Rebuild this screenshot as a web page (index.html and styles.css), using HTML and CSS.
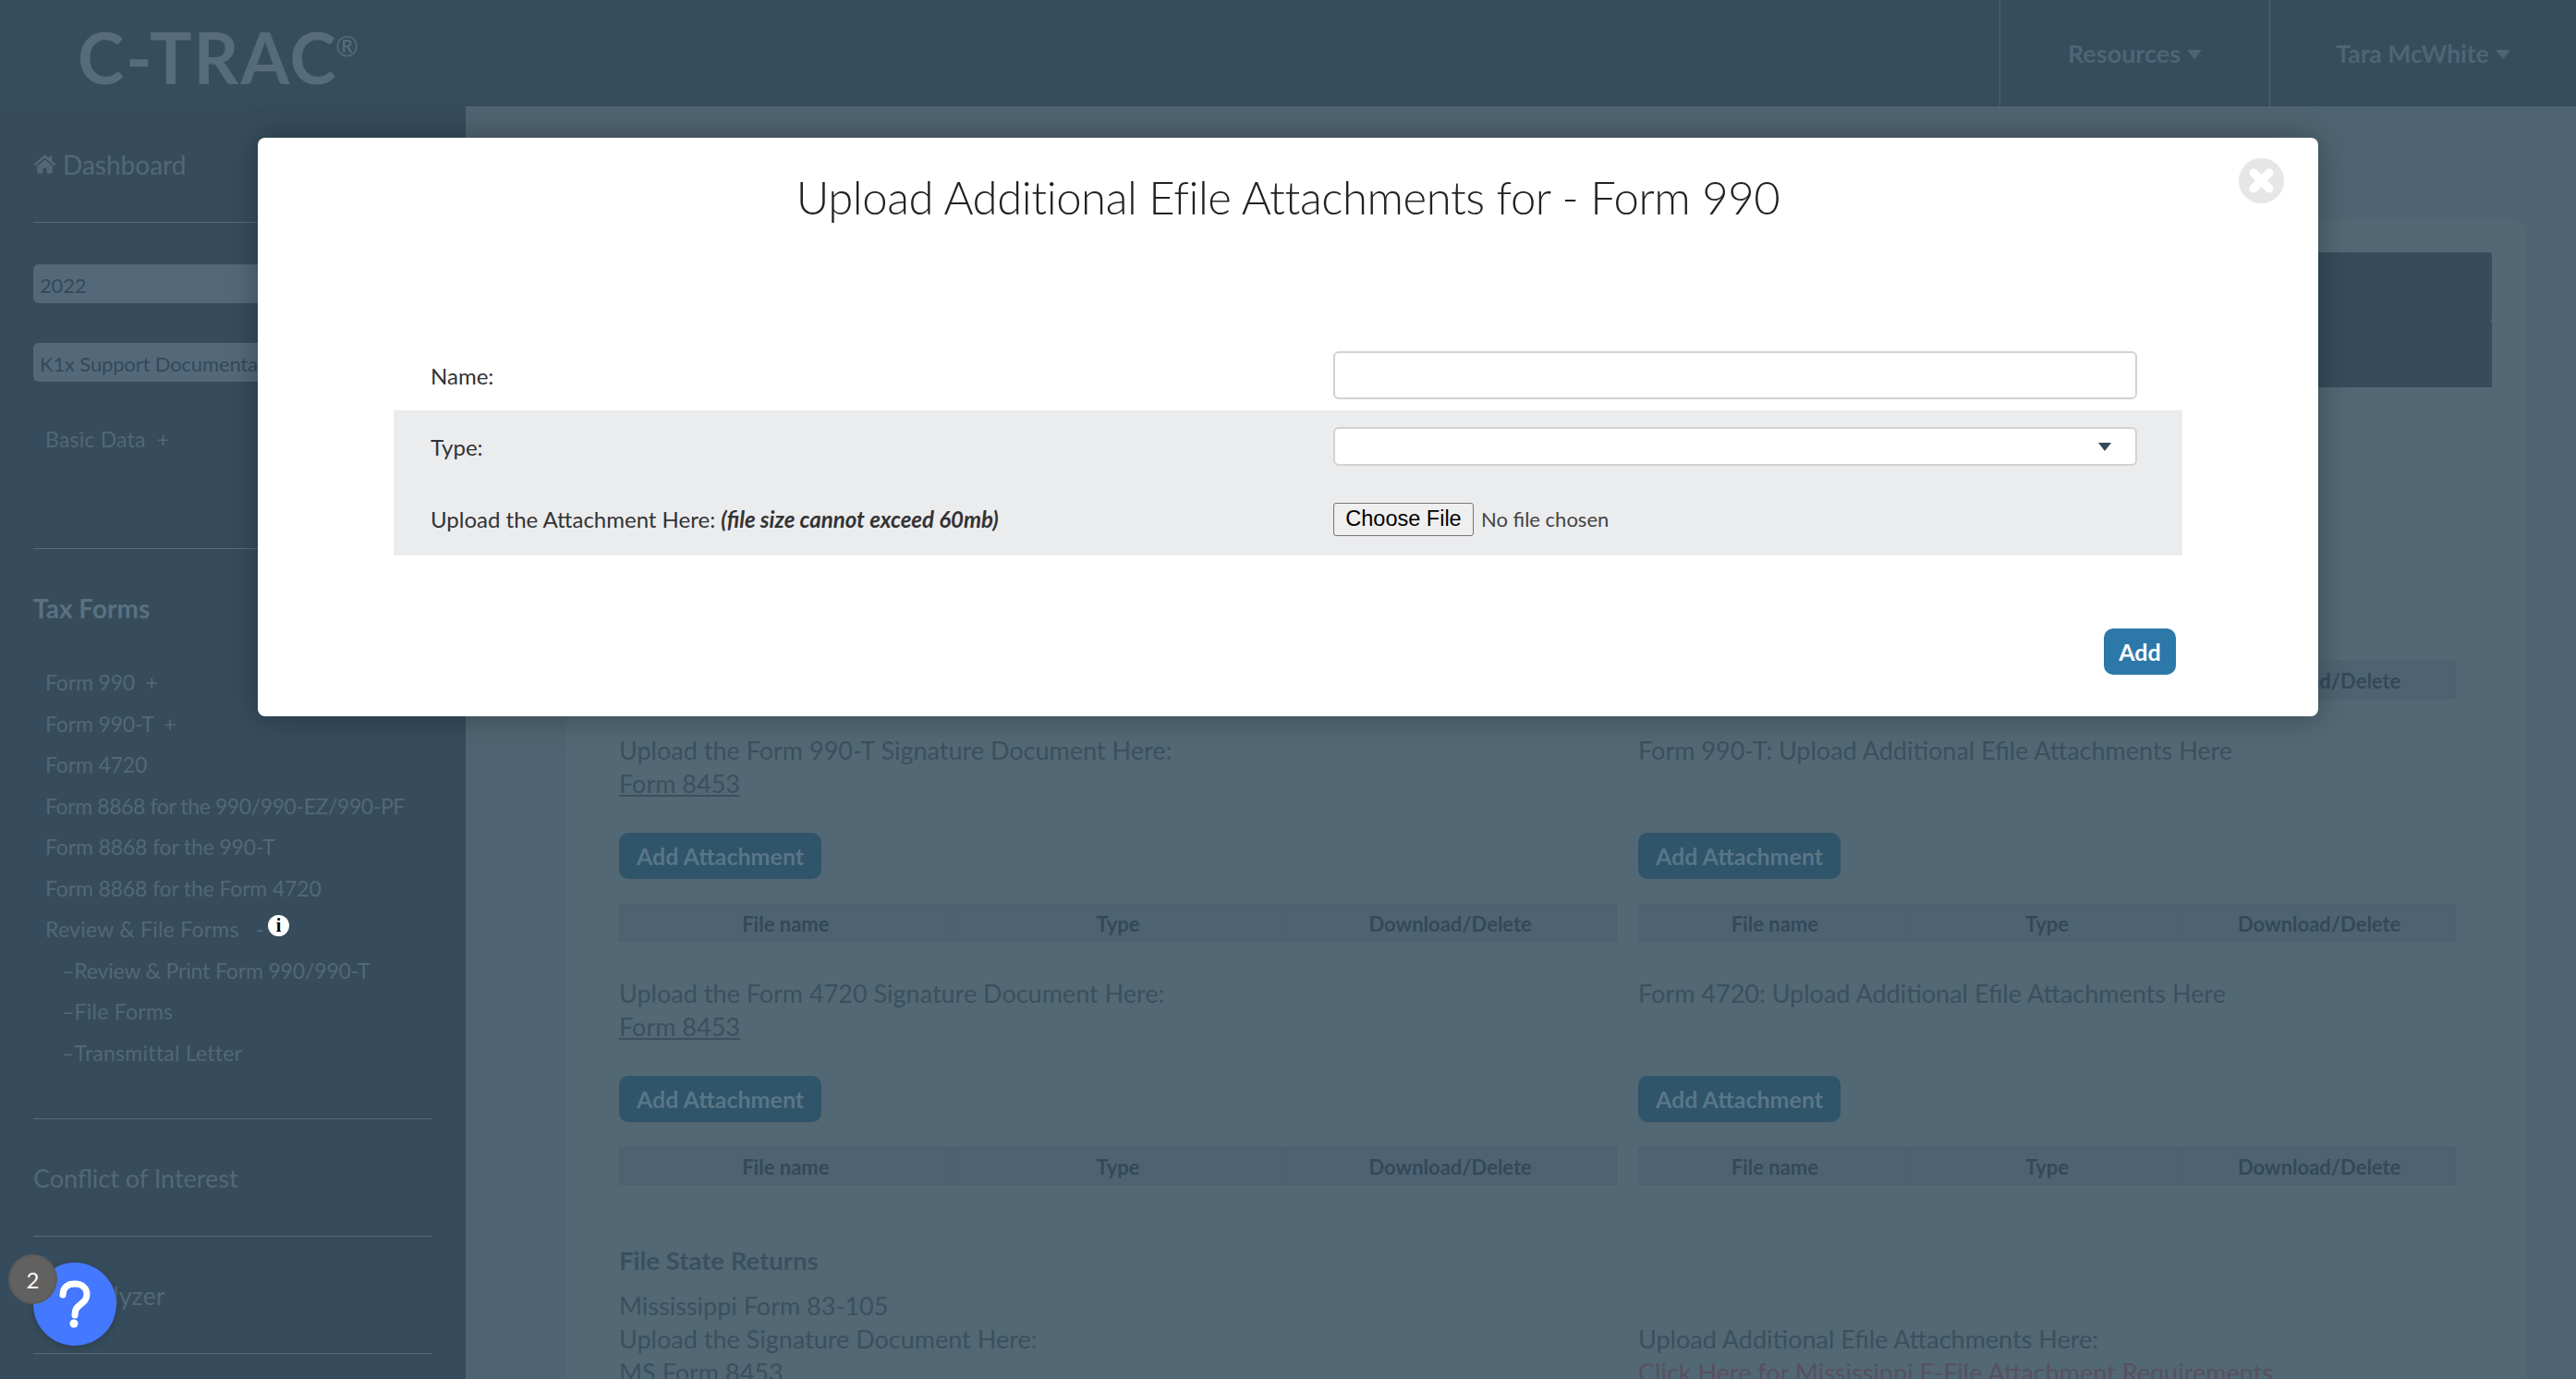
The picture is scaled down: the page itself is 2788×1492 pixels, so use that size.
FILE: index.html
```html
<!DOCTYPE html>
<html lang="en">
<head>
<meta charset="utf-8">
<title>C-TRAC</title>
<link rel="stylesheet" href="styles.css">
</head>
<body>
<div class="app">
  <header class="topbar">
    <div class="logo">C-TRAC<sup class="reg">®</sup></div>
    <nav class="topnav">
      <div class="topnav-item res">Resources<span class="caret"></span></div>
      <div class="topnav-item usr">Tara McWhite<span class="caret"></span></div>
    </nav>
  </header>
  <div class="body-row">
    <aside class="sidebar">
      <div class="side-dash">
        <svg class="home" viewBox="0 0 24 20"><path d="M12 0.5 L0.5 10.2 L2 12 L12 3.6 L22 12 L23.5 10.2 L19.5 6.8 V1.5 H16.5 V4.3 Z M4 12.2 V19.5 H10 V14 H14 V19.5 H20 V12.2 L12 5.5 Z"/></svg>
        <span>Dashboard</span>
      </div>
      <div class="side-selects">
        <div class="side-select">2022</div>
        <div class="side-select">K1x Support Documentation</div>
        <div class="side-link basic">Basic Data&nbsp;&nbsp;+</div>
      </div>
      <div class="side-section taxforms">
        <div class="side-title">Tax Forms</div>
        <ul class="side-list">
          <li>Form 990&nbsp;&nbsp;+</li>
          <li>Form 990-T&nbsp;&nbsp;+</li>
          <li>Form 4720</li>
          <li class="tight">Form 8868 for the 990/990-EZ/990-PF</li>
          <li>Form 8868 for the 990-T</li>
          <li>Form 8868 for the Form 4720</li>
          <li class="wordy">Review &amp; File Forms&nbsp;&nbsp;&nbsp;-<span class="info">i</span></li>
          <li class="sub">–Review &amp; Print Form 990/990-T</li>
          <li class="sub wordy">–File Forms</li>
          <li class="sub wordy">–Transmittal Letter</li>
        </ul>
      </div>
      <div class="side-section single">Conflict of Interest</div>
      <div class="side-section single">K1 Analyzer</div>
    </aside>
    <main class="main">
      <section class="card">
        <div class="dark-box"></div>
        <div class="dark-box second"></div>
        <div class="upload-grid">
          <div class="cell"></div>
          <div class="cell first-right">
            <table class="files"><tr><th>File name</th><th>Type</th><th>Download/Delete</th></tr></table>
          </div>
          <div class="cell">
            <p>Upload the Form 990-T Signature Document Here:</p>
            <p><a class="doc">Form 8453</a></p>
            <button class="btn-dim">Add Attachment</button>
            <table class="files"><tr><th>File name</th><th>Type</th><th>Download/Delete</th></tr></table>
          </div>
          <div class="cell">
            <p>Form 990-T: Upload Additional Efile Attachments Here</p>
            <p>&nbsp;</p>
            <button class="btn-dim">Add Attachment</button>
            <table class="files"><tr><th>File name</th><th>Type</th><th>Download/Delete</th></tr></table>
          </div>
          <div class="cell">
            <p>Upload the Form 4720 Signature Document Here:</p>
            <p><a class="doc">Form 8453</a></p>
            <button class="btn-dim">Add Attachment</button>
            <table class="files"><tr><th>File name</th><th>Type</th><th>Download/Delete</th></tr></table>
          </div>
          <div class="cell">
            <p>Form 4720: Upload Additional Efile Attachments Here</p>
            <p>&nbsp;</p>
            <button class="btn-dim">Add Attachment</button>
            <table class="files"><tr><th>File name</th><th>Type</th><th>Download/Delete</th></tr></table>
          </div>
          <div class="state">
            <h4>File State Returns</h4>
            <p>Mississippi Form 83-105</p>
            <p>Upload the Signature Document Here:</p>
            <p>MS Form 8453</p>
          </div>
          <div class="state">
            <h4>&nbsp;</h4>
            <p>&nbsp;</p>
            <p>Upload Additional Efile Attachments Here:</p>
            <p class="req">Click Here for Mississippi E-File Attachment Requirements</p>
          </div>
        </div>
      </section>
    </main>
  </div>
</div>

<div class="help">
  <svg class="help-q" viewBox="0 0 90 90"><path d="M32 35 C32 26 38 23 45 23 C53 23 58 28 58 34 C58 42 52 44 48 48 C45.500 50.500 45 53 45 57" fill="none" stroke="#fff" stroke-width="7" stroke-linecap="round"/><circle cx="44" cy="66" r="4.500" fill="#fff"/></svg>
  <span class="help-badge">2</span>
</div>

<div class="modal" role="dialog">
  <svg class="modal-close" viewBox="0 0 49 49"><circle cx="24.500" cy="24.500" r="24.500" fill="#e6e6e6"/><path d="M16 16 L33 33 M33 16 L16 33" stroke="#fff" stroke-width="9" stroke-linecap="round"/></svg>
  <h2 class="modal-title">Upload Additional Efile Attachments for - Form 990</h2>
  <div class="form-row name-row">
    <label>Name:</label>
    <input class="text-input" type="text">
  </div>
  <div class="form-band">
    <div class="form-row type-row">
      <label>Type:</label>
      <div class="select-box"><span class="select-arrow"></span></div>
    </div>
    <div class="form-row file-row">
      <label>Upload the Attachment Here: <em>(file size cannot exceed 60mb)</em></label>
      <div class="file-field"><button class="file-btn">Choose File</button><span>No file chosen</span></div>
    </div>
  </div>
  <div class="modal-actions"><button class="btn-add">Add</button></div>
</div>
</body>
</html>
```
FILE: styles.css
```css
* { box-sizing: border-box; }
html, body { margin: 0; height: 100%; overflow: hidden; }
body {
  font-family: "Lato", "Noto Sans", sans-serif;
  font-size: 27px;
  color: #3a5060;
  background: #4f6472;
  position: relative;
}
.app { height: 1492px; display: flex; flex-direction: column; overflow: hidden; }

/* top bar */
.topbar { height: 115px; flex: none; background: #364d5d; display: flex; justify-content: space-between; }
.logo { padding: 22px 0 0 84px; font-size: 76px; line-height: 80px; font-weight: 700; color: #566c7a; letter-spacing: 2px; white-space: nowrap; }
.reg { font-size: 30px; font-weight: 400; line-height: 0; vertical-align: 30px; letter-spacing: 0; margin-left: -3px; }
.topnav { display: flex; }
.topnav-item { display: flex; align-items: center; justify-content: center; border-left: 1px solid #4e6472; font-size: 27px; font-weight: 700; color: #4e6575; }
.topnav-item.res { width: 292px; }
.topnav-item.usr { width: 332px; font-size: 26.500px; }
.caret { margin-left: 7px; margin-top: 2px; border-left: 8px solid transparent; border-right: 8px solid transparent; border-top: 10px solid #4e6575; }

.body-row { flex: 1; display: flex; min-height: 0; }

/* sidebar */
.sidebar { width: 504px; flex: none; background: #364c5c; padding: 0 36px; color: #526876; font-size: 23px; letter-spacing: -0.150px; }
.side-dash { height: 126px; display: flex; align-items: center; gap: 7px; border-bottom: 1px solid #54697a; font-size: 28px; letter-spacing: 0; }
.home { width: 25px; height: 21px; fill: #526876; }
.side-selects { height: 353px; padding-top: 45px; border-bottom: 1px solid #54697a; }
.side-select { height: 42px; margin-bottom: 43px; padding: 2px 7px 0; display: flex; align-items: center; background: #53697a; border-radius: 6px; color: #33495a; font-size: 22px; white-space: nowrap; }
.side-link.basic { margin-left: 13px; padding-top: 5px; letter-spacing: 0.200px; }
.taxforms { height: 617px; padding-top: 44px; border-bottom: 1px solid #54697a; }
.side-title { font-size: 28px; font-weight: 700; letter-spacing: 0; color: #5a7180; line-height: 40px; }
.side-list { list-style: none; margin: 38px 0 0; padding: 0 0 0 13px; }
.side-list li { height: 44.560px; line-height: 44.560px; white-space: nowrap; position: relative; }
.side-list .sub { padding-left: 18px; }
.side-list .tight { letter-spacing: -0.400px; }
.side-list .wordy { letter-spacing: 0.250px; }
.info { display: inline-flex; align-items: center; justify-content: center; width: 23px; height: 23px; margin-left: 4px; border-radius: 50%; background: #fff; color: #000; font: 700 20px/23px "Liberation Serif", serif; letter-spacing: 0; vertical-align: 6px; }
.single { height: 127px; display: flex; align-items: center; font-size: 27px; letter-spacing: 0; border-bottom: 1px solid #54697a; white-space: nowrap; }

/* main */
.main { flex: 1; min-width: 0; padding: 122px 55px 0 109px; }
.card { background: #526874; border-radius: 10px; padding: 36px 36px 0 57px; height: 1400px; }
.dark-box { height: 73px; background: #364c5c; border-radius: 4px 4px 0 0; }
.upload-grid { margin-top: 112px; display: grid; grid-template-columns: 1080px 885px; column-gap: 23px; }
.cell { height: 263px; }
.first-right { padding-top: 157px; }
.cell p, .state p { margin: 0; height: 36px; line-height: 36px; white-space: nowrap; }
.doc { text-decoration: underline; }
.btn-dim { display: block; height: 50px; width: 219px; margin-top: 35px; border: 0; border-radius: 10px; background: #305469; color: #587688; font: 700 25px "Lato", sans-serif; padding: 0; }
.files { width: 100%; height: 41px; margin-top: 27px; border-collapse: collapse; table-layout: fixed; background: #4e6372; }
.files th { border: 1px solid #4b6070; padding: 2px 0 0; font-size: 22px; font-weight: 700; color: #33495a; }
.state { padding-top: 26px; }
.state h4 { margin: 0 0 13px; height: 36px; line-height: 36px; font-size: 27.500px; font-weight: 700; color: #3a5060; }
.req { color: #58505f; }

/* help bubble */
.help { position: absolute; left: 36px; top: 1366px; width: 90px; height: 90px; border-radius: 50%; background: #4478ff; box-shadow: 0 2px 8px rgba(0,0,0,.2); }
.help-q { display: block; width: 90px; height: 90px; }
.help-badge { position: absolute; left: -27px; top: -9px; width: 53px; height: 54px; border-radius: 50%; background: #616161; border: 2px solid #5b5b5b; color: #fff; font-size: 24px; display: flex; align-items: center; justify-content: center; }

/* modal */
.modal { position: absolute; left: 279px; top: 149px; width: 2230px; height: 626px; background: #fff; border-radius: 8px; box-shadow: 0 0 34px rgba(0,0,0,.3); color: #333; }
.modal-close { position: absolute; right: 37px; top: 22px; width: 49px; height: 49px; }
.modal-title { margin: 0 0 86px; height: 128px; display: flex; align-items: center; justify-content: center; font-size: 49px; letter-spacing: -0.400px; font-weight: 300; color: #222; }
.form-row { display: grid; grid-template-columns: 1017px 870px; align-items: center; padding: 0; margin: 0 147px; }
.form-row label { padding-left: 40px; font-size: 24px; white-space: nowrap; }
.form-row em { font-weight: 700; }
.form-band .form-row { margin: 0; }
.form-band { margin: 0 147px; background: #ebecee; }
.name-row { height: 81px; padding-top: 5px; }
.type-row { height: 78px; }
.file-row { height: 79px; }
.text-input { display: block; width: 870px; height: 52px; margin: 0; border: 2px solid #d2d2d2; border-radius: 6px; background: #fff; }
.select-box { height: 42px; border: 2px solid #d2d2d2; border-radius: 6px; background: #fff; display: flex; align-items: center; justify-content: flex-end; padding-right: 26px; }
.select-arrow { border-left: 7px solid transparent; border-right: 7px solid transparent; border-top: 9px solid #35495a; }
.file-field { display: flex; align-items: center; gap: 8px; font-size: 22px; color: #444; }
.file-btn { width: 152px; height: 36px; padding: 0; background: #efefef; border: 1px solid #767676; border-radius: 3px; color: #000; font: 23.500px "Liberation Sans", Arial, sans-serif; }
.modal-actions { display: flex; justify-content: flex-end; padding: 79px 7px 0 0; margin: 0 147px; }
.btn-add { width: 78px; height: 50px; padding: 0; border: 0; border-radius: 10px; background: #2b78a9; color: #fff; font: 700 25px "Lato", sans-serif; }
```
